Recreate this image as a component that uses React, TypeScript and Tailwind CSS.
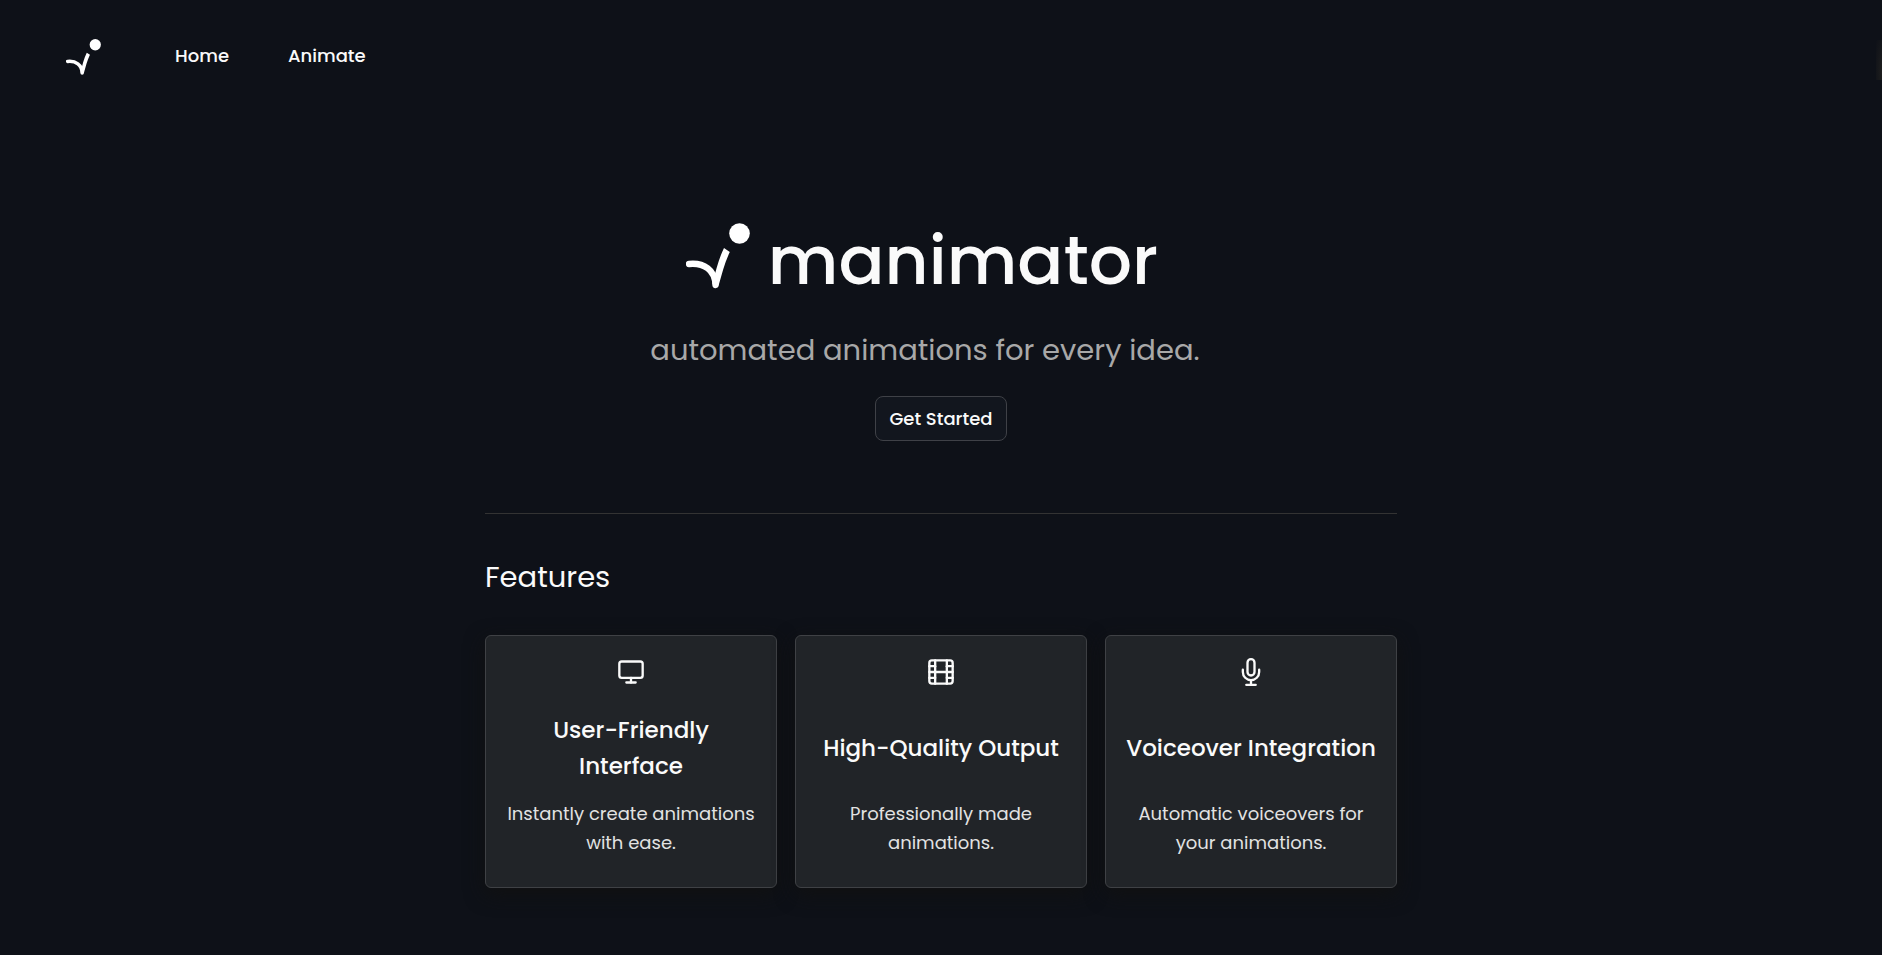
import React from 'react';
import { FiFilm, FiMic, FiMonitor } from 'react-icons/fi';

const features = [
  {
    title: 'User-Friendly Interface',
    description: 'Instantly create animations with ease.',
    icon: <FiMonitor className="size-7" />,
  },
  {
    title: 'High-Quality Output',
    description: 'Professionally made animations.',
    icon: <FiFilm className="size-7" />,
  },
  {
    title: 'Voiceover Integration',
    description: 'Automatic voiceovers for your animations.',
    icon: <FiMic className="size-7" />,
  },
];

const Logo = ({ className }: { className: string }) => (
  <svg viewBox="0 0 64 66" className={className} fill="none" aria-hidden="true">
    <circle cx="53.5" cy="10.5" r="10.3" fill="white" />
    <path
      d="M3 41 C18 39.5 29 47 29.5 62"
      stroke="white"
      strokeWidth="6.4"
      strokeLinecap="round"
    />
    <path d="M26.4 61 C30 47 33 35 38 25 L43.8 29 C38.5 40 36 51 32.6 62.5 Z" fill="white" />
  </svg>
);

const App = () => {
  return (
    <div className="min-h-screen overflow-x-hidden bg-[#0e1118] font-[Poppins,Inter,sans-serif] text-[#fafafa]">
      <header className="flex h-28 items-center justify-between pl-[66px]">
        <nav className="flex items-center">
          <a href="#" aria-label="manimator" className="pt-0.5">
            <Logo className="w-[35px]" />
          </a>
          <a href="#" className="ml-[74px] text-lg font-medium">Home</a>
          <a href="#animate" className="ml-[59px] text-lg font-medium">Animate</a>
        </nav>
        <div className="mb-8 h-10 w-1.5 self-end bg-radial-[at_100%_80%] from-[#1e1e1e] to-transparent"></div>
      </header>

      <main className="mx-auto max-w-[912px] pb-16">
        <section className="flex flex-col items-center border-b border-[#333333] pt-[97px] pb-[72px]">
          <h1 className="flex items-center pr-[38px] text-[68px] leading-[104px] font-medium">
            <Logo className="mr-[18px] mb-2.5 w-16" />
            manimator
          </h1>
          <p className="mt-[15px] pr-8 text-[29px] leading-[44px] text-[#a8a8a8]">
            automated animations for every idea.
          </p>
          <button
            type="button"
            className="mt-6 h-[45px] rounded-lg border border-[#3f4147] bg-[#12161e] px-[13px] text-lg font-medium"
          >
            Get Started
          </button>
        </section>

        <section className="pt-[41px]">
          <h2 className="text-[29px] leading-[44px]">Features</h2>
          <div className="mt-9 grid grid-cols-3 gap-[18px]">
            {features.map((feature) => (
              <div
                key={feature.title}
                className="flex flex-col items-center rounded-md border border-[#3f4145] bg-[#212428] px-4 pt-[22px] pb-[30px] text-center shadow-[0_6px_20px_#111111]"
              >
                {feature.icon}
                <h3 className="mt-[26px] flex min-h-[72px] items-center text-[23px] leading-9 font-medium">
                  {feature.title}
                </h3>
                <p className="mt-[15px] text-lg leading-[29px] text-[#e2e2e2]">{feature.description}</p>
              </div>
            ))}
          </div>
        </section>
      </main>
    </div>
  );
};

export default App;
